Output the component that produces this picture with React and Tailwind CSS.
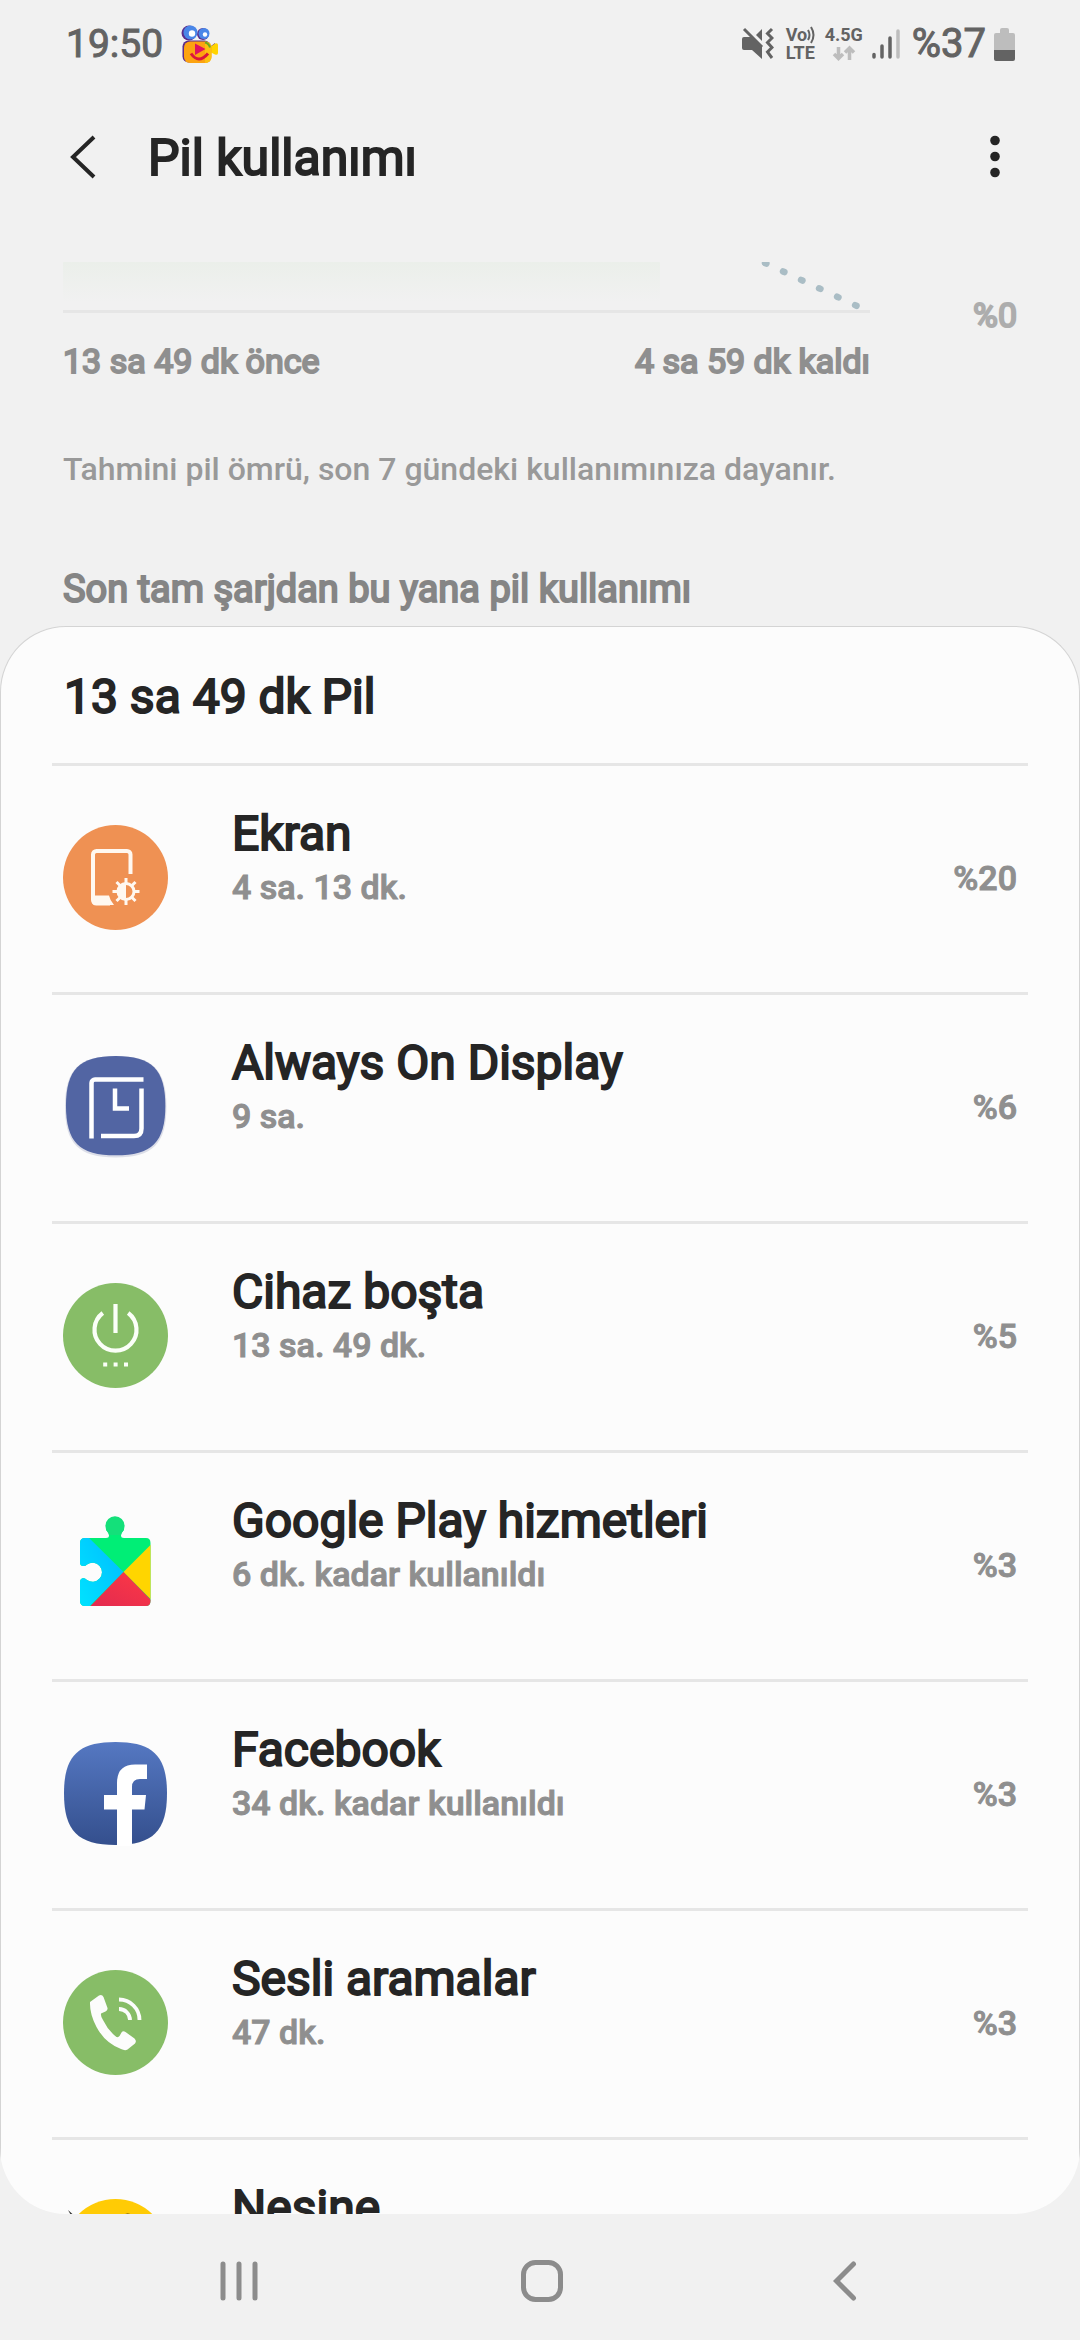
const APPS = [
  { id: "screen", name: "Ekran", detail: "4 sa. 13 dk.", percent: "%20", Icon: ScreenIcon },
  { id: "aod", name: "Always On Display", detail: "9 sa.", percent: "%6", Icon: AlwaysOnIcon },
  { id: "idle", name: "Cihaz boşta", detail: "13 sa. 49 dk.", percent: "%5", Icon: IdleIcon },
  { id: "play", name: "Google Play hizmetleri", detail: "6 dk. kadar kullanıldı", percent: "%3", Icon: PlayServicesIcon },
  { id: "facebook", name: "Facebook", detail: "34 dk. kadar kullanıldı", percent: "%3", Icon: FacebookIcon },
  { id: "calls", name: "Sesli aramalar", detail: "47 dk.", percent: "%3", Icon: CallsIcon },
  { id: "nesine", name: "Nesine", detail: "", percent: "", Icon: NesineIcon },
];

const SQUIRCLE = "M52.5 1C90 1 104 15 104 52.5S90 104 52.5 104S1 90 1 52.5S15 1 52.5 1Z";

function ScreenIcon() {
  return (
    <svg viewBox="0 0 105 105" className="size-full" aria-hidden="true">
      <circle cx="52.5" cy="52.5" r="52.5" fill="#ef9153" />
      <path d="M67.5 49V29.5a3.5 3.5 0 0 0-3.5-3.5H33.5a3.5 3.5 0 0 0-3.5 3.5V75a3.5 3.5 0 0 0 3.5 3.5H47" fill="none" stroke="#fff8f0" strokeWidth="4" />
      <path d="M29 70.5h17q1 5 5 9.5H32q-3 0-3-4z" fill="#fff8f0" />
      <g stroke="#fff8f0" strokeWidth="3" fill="none">
        <circle cx="63" cy="66.5" r="8" />
        <path d="M63 58.5V53M63 74.5V80M55 66.5H49.5M71 66.5H76.5M57.3 60.8L53.5 57M68.7 60.8L72.5 57M57.3 72.2L53.5 76M68.7 72.2L72.5 76" />
      </g>
      <path d="M63 58.5a8 8 0 0 0 0 16z" fill="#fff8f0" />
    </svg>
  );
}

function AlwaysOnIcon() {
  return (
    <svg viewBox="0 0 105 105" className="size-full" aria-hidden="true">
      <path d={SQUIRCLE} transform="translate(1 1) scale(0.985)" fill="#dcdee8" />
      <path d={SQUIRCLE} transform="translate(2 1) scale(0.965)" fill="#5265a3" />
      <g fill="none" stroke="#fff" strokeWidth="4.5">
        <path d="M80.5 25.5H32a3.5 3.5 0 0 0-3.5 3.5V84.5" />
        <path d="M38 82H71q7.5 0 7.5-7.5V34.5" />
        <path d="M52 34.5V54.5H66" />
      </g>
    </svg>
  );
}

function IdleIcon() {
  return (
    <svg viewBox="0 0 105 105" className="size-full" aria-hidden="true">
      <circle cx="52.5" cy="52.5" r="52.5" fill="#87bd67" />
      <path d="M39.8 30A21 21 0 1 0 65.2 30M52.5 21V50" fill="none" stroke="#fbfff8" strokeWidth="4.2" />
      <path d="M40.2 79.5h4v4h-4zM50.6 79.5h4v4h-4zM61 79.5h4v4h-4z" fill="#fbfff8" />
    </svg>
  );
}

function PlayServicesIcon() {
  return (
    <svg viewBox="0 0 105 105" className="size-full" aria-hidden="true">
      <defs>
        <clipPath id="puzzle">
          <path d="M22 26H43Q46 26 46 23.5Q46 22 45 20.5A9.6 9.6 0 1 1 59 20.5Q58 22 58 23.5Q58 26 61 26H83Q87.5 26 87.5 31V89Q87.5 94 83 94H22Q17 94 17 89V70Q17 66.5 20.5 66Q22.5 66.5 24 68A9.5 9.5 0 1 0 24 52.5Q22.5 54 20.5 54Q17 54 17 50.5V31Q17 26 22 26Z" />
        </clipPath>
        <linearGradient id="playBlue" x1="1" y1="0" x2="0" y2="1">
          <stop offset="0" stopColor="#00b9ff" />
          <stop offset="1" stopColor="#00e5ff" />
        </linearGradient>
        <linearGradient id="playRed" x1="1" y1="0" x2="0" y2="1">
          <stop offset="0" stopColor="#ff3a44" />
          <stop offset="1" stopColor="#e22a50" />
        </linearGradient>
      </defs>
      <g clipPath="url(#puzzle)">
        <path d="M17 17H88V95H17z" fill="#00ee76" />
        <path d="M40 3H64V23H40z" fill="#14e07a" />
        <path d="M17 17L60.5 60L17 104z" fill="url(#playBlue)" />
        <path d="M88 32.5L60.5 60L88 87.5z" fill="#ffd500" />
        <path d="M60.5 60L95 95H26.5z" fill="url(#playRed)" />
      </g>
    </svg>
  );
}

function FacebookIcon() {
  return (
    <svg viewBox="0 0 105 105" className="size-full" aria-hidden="true">
      <defs>
        <linearGradient id="fbBlue" x1="0" y1="0" x2="0" y2="1">
          <stop offset="0" stopColor="#5578c2" />
          <stop offset="1" stopColor="#344f8d" />
        </linearGradient>
      </defs>
      <path d={SQUIRCLE} fill="url(#fbBlue)" />
      <path d="M54 105V68.5H41V54H54V42Q54 23.5 72 23.5H84V38H77Q69 38 69 46V54H83L81.5 68.5H69V105z" fill="#fff" />
    </svg>
  );
}

function CallsIcon() {
  return (
    <svg viewBox="0 0 105 105" className="size-full" aria-hidden="true">
      <circle cx="52.5" cy="52.5" r="52.5" fill="#87bd67" />
      <path d="M27 32L36 25.5Q39 24 40.5 27L44.5 38Q45 40.5 42.5 41.5L38 43.5Q37.5 46 40 50Q45 60.5 53.5 67Q55.5 67.5 56.5 66L58.5 62.5Q60 60.5 62.5 62L71.5 68.5Q74 71 72 73.5L64.5 79.5Q62 81 58 79Q42 73 33.5 57Q26.5 44 27 32Z" fill="#fcfcfc" />
      <path d="M56 39a11 11 0 0 1 11 11M56 29.5a20.5 20.5 0 0 1 20.5 20.5" fill="none" stroke="#fcfcfc" strokeWidth="3.8" />
    </svg>
  );
}

function NesineIcon() {
  return (
    <svg viewBox="0 0 105 105" className="size-full" aria-hidden="true">
      <circle cx="52.5" cy="52.5" r="52.5" fill="#ffcb05" />
      <path d="M5 11L15 20H10z" fill="#333" />
      <path d="M60 16q5-3 9 0v6h-9z" fill="#4a3d10" />
    </svg>
  );
}

function CameraBadge() {
  return (
    <svg viewBox="0 0 38 40" className="h-10 w-[38px]" aria-hidden="true">
      <g fill="#5b2d8c">
        <circle cx="8" cy="9" r="7.5" />
        <circle cx="22" cy="10" r="6" />
        <rect x="1.5" y="16.5" width="28" height="22" rx="6" />
        <path d="M30 22l4-3v4z" />
      </g>
      <circle cx="9.5" cy="8.5" r="7" fill="#4a86e8" />
      <circle cx="23" cy="9.5" r="5.5" fill="#4a86e8" />
      <circle cx="11" cy="9.5" r="3.2" fill="#fff" />
      <circle cx="24" cy="10.5" r="2.2" fill="#fff" />
      <path d="M29 23l5-3.5q3-1 3 1.5v8q0 2.5-3 1.5L29 28z" fill="#ffd400" />
      <rect x="3" y="17.5" width="27.5" height="21.5" rx="6" fill="#fca311" />
      <path d="M24 17.5q6.5 0 6.5 7v8q0 6.5-6.5 6.5z" fill="#fdc010" />
      <path d="M14 19.5l10.5 5.5l-10.5 6z" fill="#e0115f" />
      <path d="M10 29.5q7.5 11 17 0" fill="none" stroke="#dc143c" strokeWidth="3" />
      <path d="M24 18.5q4 1 5 5" fill="none" stroke="#6aa821" strokeWidth="2" />
    </svg>
  );
}

function StatusBar() {
  return (
    <div className="flex h-[84px] items-center justify-between pt-1 pr-[65px] pl-[66px] text-[#636363]">
      <div className="flex items-center gap-[18px]">
        <span className="text-[39px] leading-[52px] [-webkit-text-stroke:1px]">19:50</span>
        <CameraBadge />
      </div>
      <div className="flex items-center">
        <svg viewBox="0 0 32 34" className="h-[34px] w-8" aria-hidden="true">
          <path d="M20 2v12l-6-6z" fill="#636363" />
          <path d="M0 12q0-2 2-2h8l10 10v12L10 23H2q-2 0-2-2z" fill="#636363" />
          <path d="M2 2L20 20" stroke="#636363" strokeWidth="3" />
          <path d="M30 2l-4.5 4.5L30 11l-4.5 4.5L30 20.5l-4.5 4.5L30 31" fill="none" stroke="#636363" strokeWidth="3" />
        </svg>
        <div className="ml-3 flex w-9 flex-col text-[18px] leading-[18px] font-bold">
          <span className="flex items-center">
            Vo
            <svg viewBox="0 0 8 18" className="h-[18px] w-2" aria-hidden="true">
              <path d="M1 4q3 5 0 10M4 1q5 8 0 16" fill="none" stroke="#636363" strokeWidth="2" />
            </svg>
          </span>
          <span>LTE</span>
        </div>
        <div className="ml-1 flex w-9 flex-col items-center text-[18px] leading-[18px] font-bold">
          <span>4.5G</span>
          <svg viewBox="0 0 24 18" className="h-[18px] w-6" aria-hidden="true">
            <path d="M6.5 3v11M2 10l4.5 4.5L11 10M17.5 16V5M13 8.5L17.5 4L22 8.5" fill="none" stroke="#bdbdbd" strokeWidth="3.5" />
          </svg>
        </div>
        <svg viewBox="0 0 28 32" className="ml-[10px] h-8 w-7" aria-hidden="true">
          <g strokeWidth="3.5" strokeLinecap="round" stroke="#636363">
            <path d="M2 26.5V29M10 18V29M18 10V29" />
            <path d="M26 3V29" stroke="#bdbdbd" />
          </g>
        </svg>
        <span className="ml-3 text-[40px] leading-[52px] [-webkit-text-stroke:1px]">%37</span>
        <svg viewBox="0 0 21 34" className="ml-2 h-[34px] w-[21px]" aria-hidden="true">
          <path d="M6 3q0-2 2-2h5q2 0 2 2v3h4q2 0 2 2v15H0V8q0-2 2-2h4z" fill="#bdbdbd" />
          <path d="M0 23h21v9q0 2-2 2H2q-2 0-2-2z" fill="#636363" />
        </svg>
      </div>
    </div>
  );
}

function Header() {
  return (
    <header className="flex h-[146px] items-center justify-between pr-[72px] pl-[60px]">
      <div className="flex items-center gap-10">
        <button type="button" aria-label="Geri" className="flex size-12 items-center justify-center">
          <svg viewBox="0 0 48 48" className="size-12" aria-hidden="true">
            <path d="M34 4L13 24L34 44" fill="none" stroke="#252525" strokeWidth="4" />
          </svg>
        </button>
        <h1 className="pt-[2px] text-[50px] leading-[60px] text-[#252525] [-webkit-text-stroke:2px]">Pil kullanımı</h1>
      </div>
      <button type="button" aria-label="Diğer seçenekler" className="flex h-12 w-[26px] items-center justify-center">
        <svg viewBox="0 0 10 44" className="h-11 w-[10px]" fill="#252525" aria-hidden="true">
          <circle cx="5" cy="5.5" r="4.8" />
          <circle cx="5" cy="21.5" r="4.8" />
          <circle cx="5" cy="37.5" r="4.8" />
        </svg>
      </button>
    </header>
  );
}

function BatteryChart() {
  return (
    <section className="flex justify-between px-[63px] text-[34px] leading-[44px] text-[#8f8f8f] [-webkit-text-stroke:2px]">
      <div className="flex-1">
        <div className="flex h-[51px] justify-between border-b-[3px] border-[#e6e6e6]">
          <div className="h-10 w-[74%] bg-linear-to-b from-[#ebefea] to-[#f1f1f1]" />
          <svg viewBox="0 0 110 48" className="h-12 w-[110px]" aria-hidden="true">
            <path d="M5 1L98 44.5" stroke="#aabdc5" strokeWidth="6.5" strokeLinecap="round" strokeDasharray="1.5 18.4" />
          </svg>
        </div>
        <div className="flex justify-between pt-[26px]">
          <span>13 sa 49 dk önce</span>
          <span>4 sa 59 dk kaldı</span>
        </div>
      </div>
      <span className="w-[147px] pt-[31px] text-right text-[#adadad]">%0</span>
    </section>
  );
}

function AppRow({ app }) {
  const { name, detail, percent, Icon } = app;
  return (
    <li className="flex h-[229px] items-start border-t-[3px] border-[#e6e6e6] px-[11px]">
      <span className="mt-[59px] size-[105px] shrink-0">
        <Icon />
      </span>
      <div className="ml-16 flex-1 pt-[38px]">
        <p className="text-[48px] leading-[60px] text-[#252525] [-webkit-text-stroke:2px]">{name}</p>
        <p className="text-[34px] leading-[46px] font-medium text-[#8f8f8f] [-webkit-text-stroke:1px]">{detail}</p>
      </div>
      <span className="pt-[90px] text-[34px] leading-[44px] font-medium text-[#8f8f8f] [-webkit-text-stroke:1px]">{percent}</span>
    </li>
  );
}

function NavBar() {
  return (
    <nav className="flex h-[126px] shrink-0 items-center justify-around pt-2 pr-[83px] pl-[87px]">
      <button type="button" aria-label="Son uygulamalar" className="flex size-16 items-center justify-center">
        <svg viewBox="0 0 40 42" className="h-[42px] w-10" aria-hidden="true">
          <path d="M4 4V38M20 4V38M36 4V38" stroke="#8c8c8c" strokeWidth="5" strokeLinecap="round" />
        </svg>
      </button>
      <button type="button" aria-label="Ana ekran" className="flex size-16 items-center justify-center">
        <svg viewBox="0 0 42 42" className="size-[42px]" aria-hidden="true">
          <rect x="2.5" y="2.5" width="37" height="37" rx="12" fill="none" stroke="#8c8c8c" strokeWidth="5" />
        </svg>
      </button>
      <button type="button" aria-label="Geri" className="flex size-16 items-center justify-center">
        <svg viewBox="0 0 24 42" className="h-[42px] w-6" aria-hidden="true">
          <path d="M20.5 4L3.5 21L20.5 38" fill="none" stroke="#8c8c8c" strokeWidth="5" strokeLinecap="round" />
        </svg>
      </button>
    </nav>
  );
}

export default function App() {
  return (
    <div className="flex h-screen flex-col overflow-hidden bg-[#f1f1f1] font-[Roboto,sans-serif]">
      <StatusBar />
      <Header />
      <main className="mt-8 min-h-0 flex-1 overflow-hidden rounded-b-[66px]">
        <BatteryChart />
        <p className="px-[63px] pt-16 text-[32px] leading-[44px] font-medium text-[#999999]">
          Tahmini pil ömrü, son 7 gündeki kullanımınıza dayanır.
        </p>
        <h2 className="px-[63px] pt-[74px] text-[38px] leading-[48px] text-[#858585] [-webkit-text-stroke:2px]">
          Son tam şarjdan bu yana pil kullanımı
        </h2>
        <section className="mt-[13px] rounded-t-[66px] border border-b-0 border-[#d4d4d4] bg-[#fcfcfc] px-[51px]">
          <h3 className="flex h-[136px] items-center px-3 pt-1 text-[48px] leading-[60px] text-[#252525] [-webkit-text-stroke:2px]">13 sa 49 dk Pil</h3>
          <ul>
            {APPS.map((app) => <AppRow key={app.id} app={app} />)}
          </ul>
        </section>
      </main>
      <NavBar />
    </div>
  );
}
